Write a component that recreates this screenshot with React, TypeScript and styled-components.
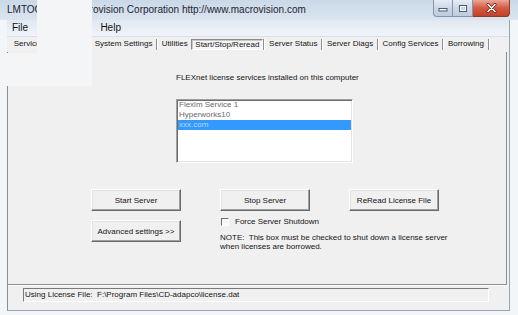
import React from 'react';
import styled, { createGlobalStyle } from 'styled-components';

const GlobalStyle = createGlobalStyle`
  html, body { margin: 0; padding: 0; background: #f3f6f9; }
  body { font-family: "Liberation Sans", Arial, sans-serif; }
`;

// Whole window, aero frame colour around the client area
const Window = styled.div`
  position: relative;
  width: 518px;
  height: 315px;
  overflow: hidden;
  display: flex;
  flex-direction: column;
  background: #f3f6f9;
  font-family: "Liberation Sans", Arial, sans-serif;
  color: #141414;
`;

const TitleBar = styled.div`
  height: 20px;
  flex: none;
  display: flex;
  align-items: flex-start;
  background: linear-gradient(#cad8e7, #dbe5f0);
`;

const Title = styled.div`
  padding-left: 7px;
  font-size: 10px;
  line-height: 20px;
  white-space: nowrap;
  color: #1b2430;
`;

const WinControls = styled.div`
  margin-left: auto;
  margin-right: 8px;
  display: flex;
`;

type Kind = 'min' | 'max' | 'close';

const CtrlButton = styled.div<{ $kind: Kind }>`
  width: ${p => (p.$kind === 'close' ? 37 : 20)}px;
  height: 17px;
  box-sizing: border-box;
  display: flex;
  align-items: center;
  justify-content: center;
  border: 1px solid ${p => (p.$kind === 'close' ? '#8c3b2c' : '#8396ae')};
  border-top: none;
  border-left-width: ${p => (p.$kind === 'min' ? 1 : 0)}px;
  border-radius: ${p =>
    p.$kind === 'min' ? '0 0 0 4px' : p.$kind === 'close' ? '0 0 4px 0' : '0'};
  background: ${p =>
    p.$kind === 'close'
      ? 'linear-gradient(#e9a797, #d45a41 50%, #c3412a)'
      : 'linear-gradient(#e6edf5, #cbd8e7 50%, #bccbdd)'};
`;

const Body = styled.div`
  flex: 1;
  display: flex;
  flex-direction: column;
  padding: 0 8px 4px 7px;
`;

const Client = styled.div`
  display: flex;
  flex-direction: column;
  background: #f0f0f0;
  border-right: 1px solid #98a4b2;
  border-bottom: 1px solid #98a4b2;
`;

const MenuBar = styled.div`
  height: 17px;
  flex: none;
  box-sizing: border-box;
  display: flex;
  align-items: center;
  background: linear-gradient(#e1e8f1, #f1f4f9);
  border-bottom: 1px solid #d9dfe7;
`;

const MenuItem = styled.span`
  padding: 0 5px;
  font-size: 10px;
  line-height: 16px;
  color: #111;
`;

const TabsRow = styled.div`
  height: 15px;
  flex: none;
  display: flex;
  align-items: center;
  padding-left: 3px;
`;

const Tab = styled.span<{ $active?: boolean }>`
  height: 11px;
  box-sizing: border-box;
  padding: 0 ${p => (p.$active ? 3 : 3.7)}px;
  font-size: 8px;
  line-height: 9px;
  white-space: nowrap;
  border: ${p => (p.$active ? '1px solid' : 'none')};
  border-color: #8a8a8a #ffffff #ffffff #8a8a8a;
  box-shadow: ${p => (p.$active ? 'inset 1px 1px 0 #c8c8c8' : 'none')};
  background: ${p => (p.$active ? '#f6f6f6' : 'transparent')};
`;

const TabSep = styled.span`
  width: 1px;
  height: 11px;
  background: #8e8e8e;
  border-right: 1px solid #ffffff;
`;

const Panel = styled.div`
  height: 233px;
  box-sizing: border-box;
  margin-right: 2px;
  padding-top: 21px;
  border-left: 1px solid #8d8d8d;
  border-right: 1px solid #8d8d8d;
  border-bottom: 1px solid #8d8d8d;
  box-shadow: 0 1px 0 #ffffff;
`;

const ListArea = styled.div`
  margin-left: 168px;
`;

const Heading = styled.div`
  font-size: 8px;
  line-height: 10px;
  white-space: nowrap;
`;

const ListBox = styled.div`
  margin-top: 16px;
  width: 177px;
  height: 64px;
  box-sizing: border-box;
  background: #ffffff;
  border: 1px solid;
  border-color: #a0a0a0 #ffffff #ffffff #a0a0a0;
  box-shadow: inset 1px 1px 0 #6d6d6d, inset -1px -1px 0 #e3e3e3;
  padding: 0 1px 0 1px;
`;

const ListItem = styled.div<{ $selected?: boolean }>`
  height: 10px;
  padding-left: 1px;
  font-size: 8px;
  line-height: 10px;
  white-space: nowrap;
  color: ${p => (p.$selected ? '#b9d9fb' : '#6b6b6b')};
  background: ${p => (p.$selected ? '#3399ff' : 'transparent')};
`;

const ButtonGrid = styled.div`
  margin-top: 26px;
  padding-left: 83px;
  display: grid;
  grid-template-columns: 90px 90px 90px;
  column-gap: 39px;
  row-gap: 5px;
  align-items: start;
`;

const Button = styled.button<{ $offset?: number }>`
  width: 90px;
  height: 22px;
  margin-top: ${p => p.$offset ?? 0}px;
  padding: 0;
  box-sizing: border-box;
  font-family: "Liberation Sans", Arial, sans-serif;
  font-size: 8px;
  color: #141414;
  background: #f0f0f0;
  border: 1px solid;
  border-color: #ffffff #696969 #696969 #ffffff;
  box-shadow: inset -1px -1px 0 #a0a0a0, inset 1px 1px 0 #e3e3e3;
`;

const ShutdownBlock = styled.div`
  grid-column: 2 / 4;
  margin-top: 1px;
`;

const CheckRow = styled.label`
  height: 10px;
  display: flex;
  align-items: center;
  font-size: 8px;
  line-height: 10px;
`;

const CheckBox = styled.span`
  width: 8px;
  height: 8px;
  margin: 0 6px 0 1px;
  box-sizing: border-box;
  background: #f8f8f8;
  border: 1px solid;
  border-color: #6d6d6d #ffffff #ffffff #6d6d6d;
`;

const Note = styled.div`
  margin-top: 5.5px;
  font-size: 8px;
  line-height: 9.5px;
  white-space: pre;
`;

const StatusRow = styled.div`
  height: 25px;
  box-sizing: border-box;
  padding: 3px 0 0 15px;
  border-left: 1px solid #8d8d8d;
`;

const StatusField = styled.div`
  width: 466px;
  height: 14px;
  box-sizing: border-box;
  padding-left: 1px;
  border: 1px solid;
  border-color: #7a7a7a #ffffff #ffffff #7a7a7a;
  font-size: 8px;
  line-height: 12px;
  white-space: pre;
`;

// erased patch that covers part of the title, menu and first tab
const Erased = styled.div<{ $x: number; $y: number; $w: number; $h: number }>`
  position: absolute;
  left: ${p => p.$x}px;
  top: ${p => p.$y}px;
  width: ${p => p.$w}px;
  height: ${p => p.$h}px;
  background: #f4f5f6;
`;

const MinGlyph = () => (
  <svg width="10" height="8" viewBox="0 0 10 8">
    <rect x="1" y="4.5" width="8" height="2.5" fill="#fff" stroke="#4a5a70" strokeWidth="1" />
  </svg>
);

const MaxGlyph = () => (
  <svg width="10" height="9" viewBox="0 0 10 9">
    <rect x="1.5" y="1.5" width="7" height="6" fill="none" stroke="#4a5a70" strokeWidth="1" />
    <rect x="2.5" y="2.5" width="5" height="4" fill="none" stroke="#fff" strokeWidth="1" />
  </svg>
);

const CloseGlyph = () => (
  <svg width="11" height="10" viewBox="0 0 11 10">
    <path d="M2 1.5 L9 8.5 M9 1.5 L2 8.5" stroke="#5a2018" strokeWidth="3" strokeLinecap="round" />
    <path d="M2 1.5 L9 8.5 M9 1.5 L2 8.5" stroke="#ffffff" strokeWidth="1.6" strokeLinecap="round" />
  </svg>
);

const tabs = [
  'Service/License File',
  'System Settings',
  'Utilities',
  'Start/Stop/Reread',
  'Server Status',
  'Server Diags',
  'Config Services',
  'Borrowing',
];
const activeTab = 3;

const services = ['Flexlm Service 1', 'Hyperworks10', 'xxx.com'];
const selected = 2;

const App: React.FC = () => {
  return (
    <>
      <GlobalStyle />
      <Window>
        <TitleBar>
          <Title>LMTOOLS by Macrovision Corporation http://www.macrovision.com</Title>
          <WinControls>
            <CtrlButton $kind="min"><MinGlyph /></CtrlButton>
            <CtrlButton $kind="max"><MaxGlyph /></CtrlButton>
            <CtrlButton $kind="close"><CloseGlyph /></CtrlButton>
          </WinControls>
        </TitleBar>
        <Body>
          <Client>
            <MenuBar>
              <MenuItem>File</MenuItem>
              <MenuItem>Edit</MenuItem>
              <MenuItem>Mode</MenuItem>
              <MenuItem>Help</MenuItem>
            </MenuBar>
            <TabsRow>
              {tabs.map((t, i) => (
                <React.Fragment key={t}>
                  <Tab $active={i === activeTab}>{t}</Tab>
                  {i !== activeTab - 1 && <TabSep />}
                </React.Fragment>
              ))}
            </TabsRow>
            <Panel>
              <ListArea>
                <Heading>FLEXnet license services installed on this computer</Heading>
                <ListBox>
                  {services.map((s, i) => (
                    <ListItem key={s} $selected={i === selected}>{s}</ListItem>
                  ))}
                </ListBox>
              </ListArea>
              <ButtonGrid>
                <Button>Start Server</Button>
                <Button>Stop Server</Button>
                <Button>ReRead License File</Button>
                <Button $offset={4}>Advanced settings &gt;&gt;</Button>
                <ShutdownBlock>
                  <CheckRow>
                    <CheckBox />
                    Force Server Shutdown
                  </CheckRow>
                  <Note>
                    {'NOTE:  This box must be checked to shut down a license server\nwhen licenses are borrowed.'}
                  </Note>
                </ShutdownBlock>
              </ButtonGrid>
            </Panel>
            <StatusRow>
              <StatusField>{'Using License File:  F:\\Program Files\\CD-adapco\\license.dat'}</StatusField>
            </StatusRow>
          </Client>
        </Body>
        <Erased $x={37} $y={0} $w={55} $h={53} />
        <Erased $x={0} $y={53} $w={92} $h={33} />
      </Window>
    </>
  );
};

export default App;
